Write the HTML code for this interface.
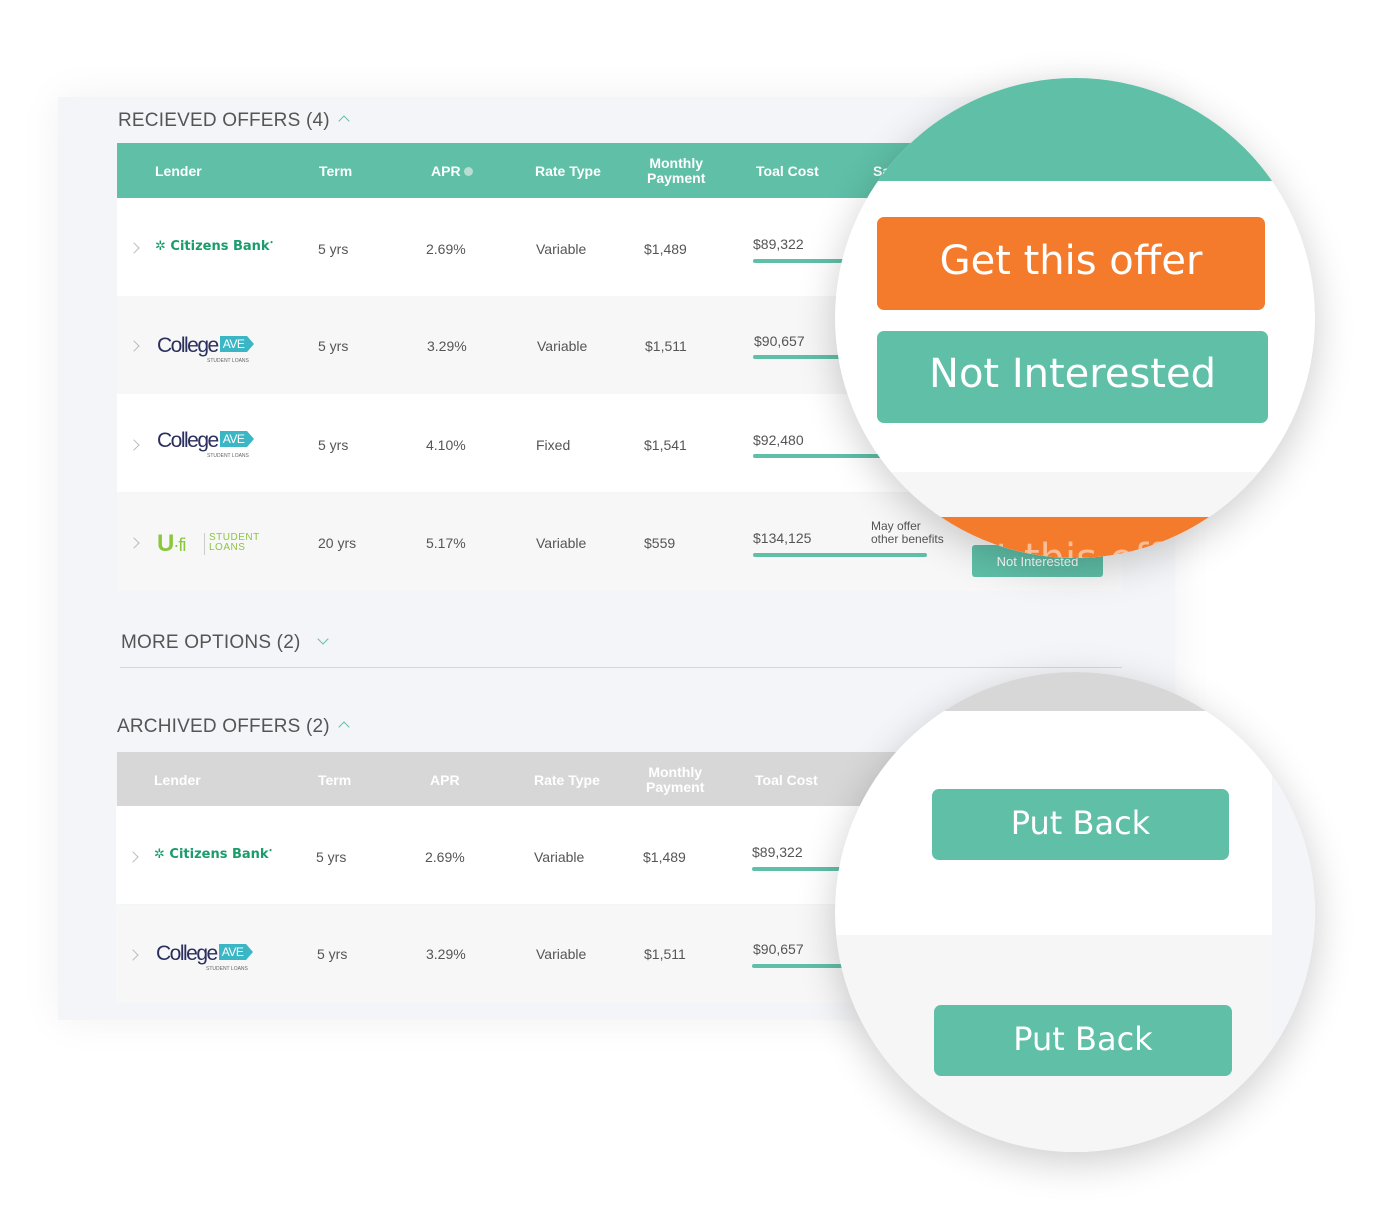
<!DOCTYPE html>
<html><head><meta charset="utf-8"><style>
*{margin:0;padding:0;box-sizing:border-box}
body{width:1380px;height:1212px;background:#fff;position:relative;overflow:hidden;font-family:"Liberation Sans",sans-serif;color:#555}
.a{position:absolute}
.panel{left:58px;top:97px;width:1117px;height:923px;background:#f4f5f8;box-shadow:0 0 40px rgba(0,0,0,0.06)}
.ttl{font-size:19px;color:#555;letter-spacing:0.2px}
.car{display:inline-block;width:8px;height:8px;border-left:1.5px solid #5fbfa7;border-top:1.5px solid #5fbfa7;transform:rotate(45deg);margin-left:10px;vertical-align:1px}
.car.d{transform:rotate(225deg);vertical-align:5px;margin-left:18px}
.hdr{height:55px;left:117px;width:1005px}
.hdr span{position:absolute;color:#fff;font-weight:bold;font-size:14px;top:20px}
.hdr span.two{top:13px;line-height:15px;text-align:center}
.row{left:117px;width:1005px;height:98px}
.row .t{position:absolute;font-size:14px;color:#555}
.chev{position:absolute;left:13px;width:8px;height:8px;border-right:1.5px solid #bbb;border-top:1.5px solid #bbb;transform:rotate(45deg)}
.bar{position:absolute;left:636px;width:174px;height:4px;border-radius:2px;background:#5fbfa7}
.cb{position:absolute;left:38px;color:#1a9c6b;font-weight:bold;font-size:13px;font-family:"DejaVu Sans",sans-serif}
.ca{position:absolute;left:40px;font-size:21px;color:#2b2f5e;letter-spacing:-1.5px;font-family:"Liberation Sans Narrow","Liberation Sans",sans-serif}
.ca b{display:inline-block;background:#3bb6c4;color:#fff;font-size:12px;font-weight:normal;letter-spacing:-0.5px;padding:1px 3px;margin-left:2px;vertical-align:4px;position:relative}
.ca b:after{content:"";position:absolute;right:-7px;top:0;border-left:7px solid #3bb6c4;border-top:8px solid transparent;border-bottom:8px solid transparent}
.ca i{position:absolute;left:50px;top:24px;font-size:5px;font-style:normal;color:#666;letter-spacing:0;white-space:nowrap}
.circ{border-radius:50%;overflow:hidden;width:480px;height:480px;box-shadow:0 10px 40px rgba(0,0,0,0.2);background:#fff}
.btn{position:absolute;color:#fff;text-align:center;border-radius:7px;font-family:"DejaVu Sans",sans-serif}
</style></head><body>
<div class="a panel"></div>

<div class="a ttl" style="left:118px;top:110px">RECIEVED OFFERS (4)<span class="car"></span></div>
<div class="a hdr" style="top:143px;background:#5fbfa7">
<span style="left:38px">Lender</span><span style="left:202px">Term</span><span style="left:314px">APR <span style="position:static;display:inline-block;width:9px;height:9px;border-radius:50%;background:#b8ddd3"></span></span><span style="left:418px">Rate Type</span><span class="two" style="left:530px">Monthly<br>Payment</span><span style="left:639px">Toal Cost</span><span style="left:756px">Sa</span>
</div>

<div class="a row" style="top:198px;background:#fff">
<div class="chev" style="top:46px"></div><div class="cb" style="top:41px">✲ Citizens Bank<sup style="font-size:6px">•</sup></div>
<div class="t" style="left:201px;top:43px">5 yrs</div><div class="t" style="left:309px;top:43px">2.69%</div><div class="t" style="left:419px;top:43px">Variable</div><div class="t" style="left:527px;top:43px">$1,489</div><div class="t" style="left:636px;top:38px">$89,322</div><div class="bar" style="top:61px"></div>
</div>
<div class="a row" style="top:296px;background:#f7f7f8">
<div class="chev" style="top:46px"></div><div class="ca" style="top:38px">College<b>AVE</b><i>STUDENT LOANS</i></div>
<div class="t" style="left:201px;top:42px">5 yrs</div><div class="t" style="left:310px;top:42px">3.29%</div><div class="t" style="left:420px;top:42px">Variable</div><div class="t" style="left:528px;top:42px">$1,511</div><div class="t" style="left:637px;top:37px">$90,657</div><div class="bar" style="top:59px"></div>
</div>
<div class="a row" style="top:394px;background:#fff">
<div class="chev" style="top:47px"></div><div class="ca" style="top:35px">College<b>AVE</b><i>STUDENT LOANS</i></div>
<div class="t" style="left:201px;top:43px">5 yrs</div><div class="t" style="left:309px;top:43px">4.10%</div><div class="t" style="left:419px;top:43px">Fixed</div><div class="t" style="left:527px;top:43px">$1,541</div><div class="t" style="left:636px;top:38px">$92,480</div><div class="bar" style="top:60px"></div>
</div>
<div class="a row" style="top:493px;background:#f7f7f8">
<div class="chev" style="top:46px"></div>
<div style="position:absolute;left:40px;top:37px;color:#8cc63f;font-weight:bold;font-size:24px;letter-spacing:-1px">U<span style="font-size:18px;font-weight:normal">·fi</span></div>
<div style="position:absolute;left:87px;top:40px;width:1px;height:22px;background:#ccc"></div>
<div style="position:absolute;left:92px;top:40px;color:#8cc63f;font-size:10px;line-height:10px;letter-spacing:0.5px">STUDENT<br>LOANS</div>
<div class="t" style="left:201px;top:42px">20 yrs</div><div class="t" style="left:309px;top:42px">5.17%</div><div class="t" style="left:419px;top:42px">Variable</div><div class="t" style="left:527px;top:42px">$559</div><div class="t" style="left:636px;top:37px">$134,125</div><div class="bar" style="top:60px"></div>
<div class="t" style="left:754px;top:27px;font-size:12px;line-height:13px">May offer<br>other benefits</div>
<div class="btn" style="left:855px;top:52px;width:131px;height:32px;background:#5fbfa7;font-size:13px;padding-top:9px;border-radius:3px;font-family:'Liberation Sans',sans-serif">Not Interested</div>
</div>

<div class="a ttl" style="left:121px;top:632px">MORE OPTIONS (2)<span class="car d"></span></div>
<div class="a" style="left:120px;top:667px;width:1002px;height:1px;background:#d6d7da"></div>

<div class="a ttl" style="left:117px;top:716px">ARCHIVED OFFERS (2)<span class="car"></span></div>
<div class="a hdr" style="top:752px;background:#d7d7d7">
<span style="left:37px">Lender</span><span style="left:201px">Term</span><span style="left:313px">APR</span><span style="left:417px">Rate Type</span><span class="two" style="left:529px">Monthly<br>Payment</span><span style="left:638px">Toal Cost</span>
</div>
<div class="a row" style="top:806px;background:#fff;left:116px">
<div class="chev" style="top:47px"></div><div class="cb" style="top:41px">✲ Citizens Bank<sup style="font-size:6px">•</sup></div>
<div class="t" style="left:200px;top:43px">5 yrs</div><div class="t" style="left:309px;top:43px">2.69%</div><div class="t" style="left:418px;top:43px">Variable</div><div class="t" style="left:527px;top:43px">$1,489</div><div class="t" style="left:636px;top:38px">$89,322</div><div class="bar" style="top:61px"></div>
</div>
<div class="a row" style="top:905px;background:#f7f7f8;left:116px">
<div class="chev" style="top:46px"></div><div class="ca" style="top:37px">College<b>AVE</b><i>STUDENT LOANS</i></div>
<div class="t" style="left:201px;top:41px">5 yrs</div><div class="t" style="left:310px;top:41px">3.29%</div><div class="t" style="left:420px;top:41px">Variable</div><div class="t" style="left:528px;top:41px">$1,511</div><div class="t" style="left:637px;top:36px">$90,657</div><div class="bar" style="top:59px"></div>
</div>

<div class="a circ" style="left:835px;top:78px">
<div class="a" style="left:0;top:0;width:480px;height:103px;background:#5fbfa7"></div>
<div class="a" style="left:0;top:394px;width:480px;height:86px;background:#f6f6f7"></div>
<div class="a" style="left:0;top:439px;width:480px;height:50px;background:#f47b2c"></div>
<div class="a" style="left:105px;top:458px;color:#fff;font-size:40px;font-family:'DejaVu Sans',sans-serif;opacity:0.5">Get this offer</div>
<div class="btn" style="left:42px;top:139px;width:388px;height:93px;background:#f47b2c;font-size:40px;padding-top:21px">Get this offer</div>
<div class="btn" style="left:42px;top:253px;width:391px;height:92px;background:#5fbfa7;font-size:40px;padding-top:20px">Not Interested</div>
</div>

<div class="a circ" style="left:835px;top:672px">
<div class="a" style="left:0;top:0;width:480px;height:39px;background:#d7d7d7"></div>
<div class="a" style="left:0;top:263px;width:480px;height:217px;background:#f6f6f7"></div>
<div class="a" style="left:437px;top:39px;width:43px;height:441px;background:#f4f5f8"></div>
<div class="btn" style="left:97px;top:117px;width:297px;height:71px;background:#5fbfa7;font-size:32px;padding-top:15px">Put Back</div>
<div class="btn" style="left:99px;top:333px;width:298px;height:71px;background:#5fbfa7;font-size:32px;padding-top:15px">Put Back</div>
</div>
</body></html>
